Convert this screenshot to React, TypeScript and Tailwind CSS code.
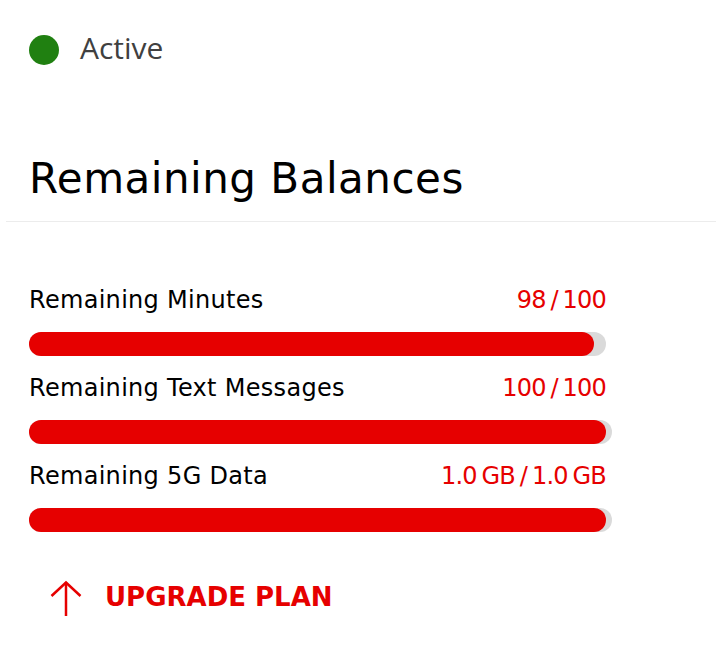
import React from 'react';

const balances = [
  { label: 'Remaining Minutes', value: '98 / 100', pct: 98 },
  { label: 'Remaining Text Messages', value: '100 / 100', pct: 100 },
  { label: 'Remaining 5G Data', value: '1.0 GB / 1.0 GB', pct: 100 },
];

function BalanceRow({ label, value, pct }: { label: string; value: string; pct: number }) {
  return (
    <div className="flex flex-col gap-[18px]">
      <div className="flex items-start justify-between text-[24px] leading-[28px]">
        <span className="text-black tracking-[0.3px]">{label}</span>
        <span className="text-[#e60000] tracking-[-0.8px] [word-spacing:-2px]">{value}</span>
      </div>
      <div className="h-[24px] w-full rounded-full bg-[#dadada]">
        <div
          className="h-full rounded-full bg-[#e60000] shadow-[6px_0_0_#dadada]"
          style={{ width: `${pct}%` }}
        />
      </div>
    </div>
  );
}

export default function App() {
  return (
    <div className="w-[716px] h-[651px] bg-white overflow-hidden font-['DejaVu_Sans',sans-serif]">
      {/* Status */}
      <div className="flex items-start gap-[21px] pl-[29px] pt-[35px]">
        <span className="w-[30px] h-[30px] rounded-full bg-[#208011] shrink-0" />
        <span className="font-['Open_Sans',sans-serif] text-[30px] leading-[30px] text-[#404040] -mt-[2px]">
          Active
        </span>
      </div>

      {/* Heading */}
      <h2 className="mt-[90px] pl-[29px] text-[42px] leading-[48px] font-normal tracking-[0.5px] text-black">
        Remaining Balances
      </h2>
      <div className="mt-[18px] ml-[6px] h-px bg-[#ececec]" />

      {/* Balances */}
      <div className="mt-[64px] pl-[29px] w-[606px] flex flex-col gap-[18px]">
        {balances.map((b) => (
          <BalanceRow key={b.label} {...b} />
        ))}
      </div>

      {/* Upgrade */}
      <div className="mt-[50px] pl-[49px] flex items-start gap-[22px]">
        <svg width="34" height="36" viewBox="0 0 34 36" fill="none" stroke="#e60000" strokeWidth="2.5" className="-mt-[2px]">
          <path d="M17 2.5V36" />
          <path d="M2.5 16L17 2.5L31.5 16" />
        </svg>
        <span className="text-[26px] leading-[30px] font-bold text-[#e60000]">UPGRADE PLAN</span>
      </div>
    </div>
  );
}
